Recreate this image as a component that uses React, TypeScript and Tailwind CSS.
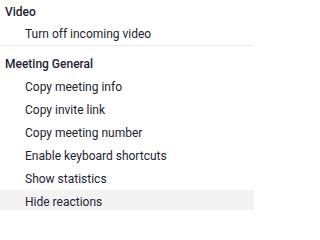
const groups = [
  { title: 'Video', items: ['Turn off incoming video'] },
  {
    title: 'Meeting General',
    items: [
      'Copy meeting info',
      'Copy invite link',
      'Copy meeting number',
      'Enable keyboard shortcuts',
      'Show statistics',
      'Hide reactions',
    ],
  },
];

export default function App() {
  return (
    <div className="w-[254px] h-[210px] overflow-hidden bg-white text-[12px] text-[#232333] font-['Roboto',sans-serif]">
      {/* Video */}
      <div className="h-[23px] flex items-center px-[5px] font-medium">{groups[0].title}</div>
      <div className="h-[22px] flex items-center pl-[25px]">{groups[0].items[0]}</div>
      <div className="h-px bg-[#ededed]" />

      {/* Meeting General */}
      <div className="pt-[6px]">
        <div className="h-[23px] flex items-center px-[5px] font-medium">{groups[1].title}</div>
        {groups[1].items.map((item) => (
          <div
            key={item}
            className={
              item === 'Hide reactions'
                ? 'h-[23px] flex items-center pl-[25px] bg-[#f3f3f3]'
                : 'h-[23px] flex items-center pl-[25px]'
            }
          >
            {item}
          </div>
        ))}
      </div>
    </div>
  );
}
